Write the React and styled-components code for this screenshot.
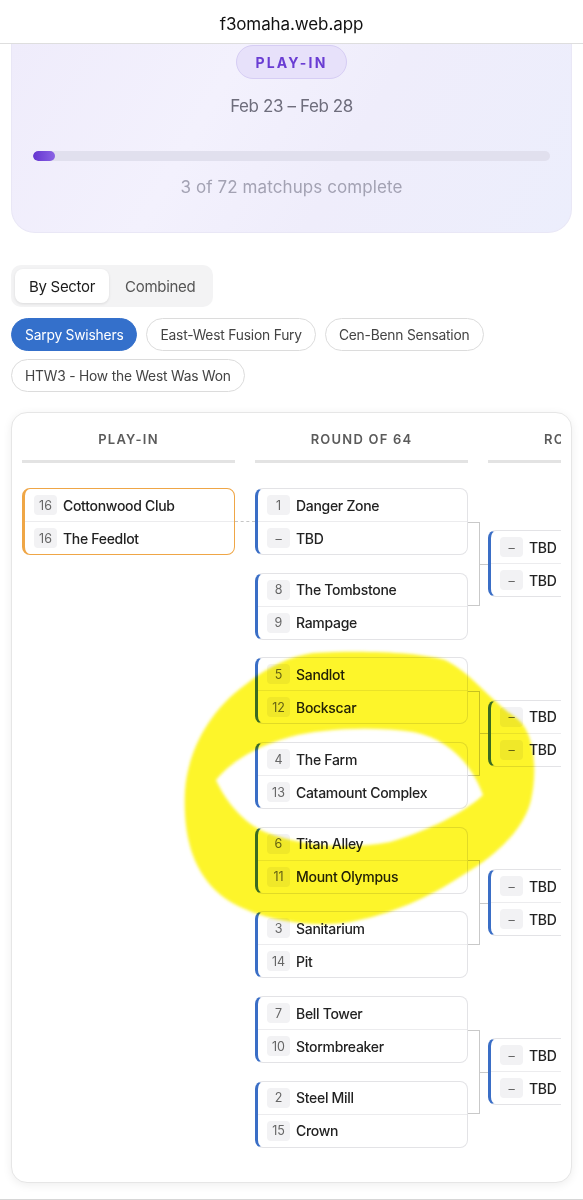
import React from "react";
import styled, { createGlobalStyle } from "styled-components";

const Global = createGlobalStyle`
  html, body { margin: 0; padding: 0; background: #ffffff; }
  body { font-family: "Inter", "Liberation Sans", sans-serif; -webkit-font-smoothing: antialiased; }
  * { box-sizing: border-box; }
`;

const Page = styled.div`
  position: relative;
  width: 583px;
  min-height: 1200px;
  border-bottom: 1px solid #d6d6d6;
  overflow: hidden;
`;

const UrlBar = styled.div`
  height: 44px;
  display: flex;
  align-items: center;
  justify-content: center;
  padding-top: 5px;
  background: #ffffff;
  border-bottom: 1px solid #dedede;
  font-size: 17px;
  color: #111;
  letter-spacing: -0.1px;
`;

const Hero = styled.section`
  margin: 0 11px;
  padding: 1px 21px 34px;
  display: flex;
  flex-direction: column;
  align-items: center;
  border: 1px solid #e9e7f6;
  border-top: none;
  border-radius: 0 0 24px 24px;
  background: linear-gradient(120deg, #efecfb 0%, #f3f1fd 35%, #efedfb 60%, #eceefc 100%);
`;

const RoundChip = styled.div`
  height: 34px;
  padding: 0 18px;
  display: flex;
  align-items: center;
  border-radius: 17px;
  background: #e7e1fa;
  border: 1px solid #d6cdf4;
  color: #6a3dd3;
  font-size: 14px;
  font-weight: 700;
  letter-spacing: 2.2px;
`;

const Dates = styled.div`
  margin-top: 16px;
  line-height: 22px;
  font-size: 17px;
  letter-spacing: -0.4px;
  color: #6e6d7c;
`;

const Track = styled.div`
  margin-top: 34px;
  align-self: stretch;
  height: 10px;
  border-radius: 5px;
  background: #e1e0ee;
  overflow: hidden;
`;

const Fill = styled.div`
  height: 100%;
  border-radius: 5px;
  background: linear-gradient(90deg, #6535d0, #8a63e4);
`;

const Progress = styled.div`
  margin-top: 15px;
  line-height: 22px;
  font-size: 17px;
  letter-spacing: 0.1px;
  color: #a3a2b3;
`;

const Controls = styled.div`
  margin: 32px 11px 0;
  display: flex;
  flex-direction: column;
  align-items: flex-start;
`;

const Segmented = styled.div`
  display: flex;
  padding: 4px;
  gap: 2px;
  border-radius: 10px;
  background: #f3f3f4;
`;

const Segment = styled.div`
  height: 34px;
  padding: 0 14px;
  display: flex;
  align-items: center;
  border-radius: 8px;
  font-size: 15px;
  letter-spacing: -0.3px;
  color: ${(p) => (p.$active ? "#1b1b1b" : "#555")};
  background: ${(p) => (p.$active ? "#ffffff" : "transparent")};
  box-shadow: ${(p) => (p.$active ? "0 1px 3px rgba(0,0,0,0.10)" : "none")};
`;

const ChipWrap = styled.div`
  margin-top: 11px;
  display: flex;
  flex-wrap: wrap;
  gap: 8px 9px;
`;

const FilterChip = styled.div`
  height: 33px;
  padding: 0 13px;
  display: flex;
  align-items: center;
  border-radius: 17px;
  font-size: 13.8px;
  letter-spacing: -0.2px;
  color: ${(p) => (p.$active ? "#ffffff" : "#444")};
  background: ${(p) => (p.$active ? "#3470cb" : "#ffffff")};
  border: 1px solid ${(p) => (p.$active ? "#3470cb" : "#dcdcdc")};
`;

const Panel = styled.section`
  margin: 20px 11px 0;
  padding: 0 10px 34px;
  border: 1px solid #e6e6e6;
  border-radius: 16px;
  background: #ffffff;
  box-shadow: 0 2px 10px rgba(0, 0, 0, 0.07);
`;

const Scroller = styled.div`
  display: flex;
  gap: 20px;
  overflow: hidden;
`;

const Column = styled.div`
  flex: 0 0 213px;
  display: flex;
  flex-direction: column;
`;

const ColHead = styled.div`
  padding: 15px 0 10px;
  line-height: 22px;
  text-align: center;
  font-size: 13px;
  font-weight: 600;
  letter-spacing: 1.2px;
  color: #5b5b5b;
  border-bottom: 3px solid #e3e3e3;
  white-space: nowrap;
`;

const ColBody = styled.div`
  padding-top: 25px;
  display: flex;
  flex-direction: column;
  gap: 17.7px;
`;

const Matchup = styled.div`
  height: 67px;
  display: flex;
  flex-direction: column;
  border-style: solid;
  border-color: ${(p) => (p.$tone === "orange" ? "#efa646" : "#e3e3e6")};
  border-width: ${(p) => (p.$tone === "orange" ? "1.5px" : "1px")};
  border-left: 3px solid ${(p) => (p.$tone === "orange" ? "#efa646" : "#3a6ec6")};
  border-radius: 8px;
  background: #ffffff;
  overflow: hidden;
`;

const Row = styled.div`
  flex: 1;
  display: flex;
  align-items: center;
  padding-left: 9px;
  gap: 6px;
  & + & { border-top: 1px solid #ececee; }
`;

const Seed = styled.span`
  width: 23px;
  height: 20px;
  flex: 0 0 23px;
  display: flex;
  align-items: center;
  justify-content: center;
  border-radius: 4px;
  background: #f2f2f4;
  font-size: 12.5px;
  color: #666;
`;

const Team = styled.span`
  font-size: 14px;
  font-weight: 500;
  letter-spacing: -0.3px;
  color: #222;
  white-space: nowrap;
`;

const PlayInSlot = styled.div`
  position: relative;
  &::after {
    content: "";
    position: absolute;
    left: 100%;
    top: 33px;
    width: 20px;
    border-top: 1px dashed #c6c6c6;
  }
`;

const Pair = styled.div`
  position: relative;
  display: flex;
  flex-direction: column;
  gap: 17.7px;
  &::after {
    content: "";
    position: absolute;
    left: 100%;
    top: 33.5px;
    bottom: 33.5px;
    width: 11px;
    border: 1px solid #c9c9c9;
    border-left: none;
  }
`;

const Slot = styled.div`
  position: relative;
  height: 151.7px;
  display: flex;
  flex-direction: column;
  justify-content: center;
  &::before {
    content: "";
    position: absolute;
    left: -9px;
    top: 50%;
    width: 9px;
    height: 1px;
    background: #c9c9c9;
  }
`;

const Highlight = styled.svg`
  position: absolute;
  left: 0;
  top: 0;
  pointer-events: none;
  mix-blend-mode: multiply;
`;

const Game = ({ tone, a, b }) => (
  <Matchup $tone={tone}>
    <Row>
      <Seed>{a[0]}</Seed>
      <Team>{a[1]}</Team>
    </Row>
    <Row>
      <Seed>{b[0]}</Seed>
      <Team>{b[1]}</Team>
    </Row>
  </Matchup>
);

const round64 = [
  [[["1", "Danger Zone"], ["–", "TBD"]], [["8", "The Tombstone"], ["9", "Rampage"]]],
  [[["5", "Sandlot"], ["12", "Bockscar"]], [["4", "The Farm"], ["13", "Catamount Complex"]]],
  [[["6", "Titan Alley"], ["11", "Mount Olympus"]], [["3", "Sanitarium"], ["14", "Pit"]]],
  [[["7", "Bell Tower"], ["10", "Stormbreaker"]], [["2", "Steel Mill"], ["15", "Crown"]]],
];

const sectors = ["Sarpy Swishers", "East-West Fusion Fury", "Cen-Benn Sensation", "HTW3 - How the West Was Won"];

export default function App() {
  const complete = 3;
  const total = 72;
  return (
    <Page>
      <Global />
      <UrlBar>f3omaha.web.app</UrlBar>
      <Hero>
        <RoundChip>PLAY-IN</RoundChip>
        <Dates>Feb 23 – Feb 28</Dates>
        <Track>
          <Fill style={{ width: `${Math.max((complete / total) * 100, 4.1)}%` }} />
        </Track>
        <Progress>{complete} of {total} matchups complete</Progress>
      </Hero>
      <Controls>
        <Segmented>
          <Segment $active>By Sector</Segment>
          <Segment>Combined</Segment>
        </Segmented>
        <ChipWrap>
          {sectors.map((s, i) => (
            <FilterChip key={s} $active={i === 0}>{s}</FilterChip>
          ))}
        </ChipWrap>
      </Controls>
      <Panel>
        <Scroller>
          <Column>
            <ColHead>PLAY-IN</ColHead>
            <ColBody>
              <PlayInSlot>
                <Game tone="orange" a={["16", "Cottonwood Club"]} b={["16", "The Feedlot"]} />
              </PlayInSlot>
            </ColBody>
          </Column>
          <Column>
            <ColHead>ROUND OF 64</ColHead>
            <ColBody>
              {round64.map((pair, i) => (
                <Pair key={i}>
                  {pair.map((g, j) => (
                    <Game key={j} a={g[0]} b={g[1]} />
                  ))}
                </Pair>
              ))}
            </ColBody>
          </Column>
          <Column>
            <ColHead>ROUND OF 32</ColHead>
            <ColBody>
              {round64.map((_, i) => (
                <Slot key={i}>
                  <Game a={["–", "TBD"]} b={["–", "TBD"]} />
                </Slot>
              ))}
            </ColBody>
          </Column>
        </Scroller>
      </Panel>
      <Highlight width="583" height="1200" viewBox="0 0 583 1200">
        <defs>
          <filter id="soft" x="-10%" y="-10%" width="120%" height="120%">
            <feGaussianBlur stdDeviation="1.6" />
          </filter>
        </defs>
        <path
          filter="url(#soft)"
          fill="#fdf52c"
          fillRule="evenodd"
          d="M 313 653 C 360 650, 420 652, 445 660 C 470 672, 490 700, 515 717 C 535 730, 537 770, 532 795 C 527 830, 490 860, 463 875 C 430 897, 390 915, 350 922 C 300 930, 240 915, 215 890 C 190 865, 183 830, 185 790 C 188 750, 210 710, 245 685 C 265 668, 290 656, 313 653 Z
             M 216 780 C 232 760, 260 745, 290 737 C 320 729, 370 726, 413 732 C 445 738, 470 760, 483 795 C 465 812, 430 830, 390 842 C 350 850, 300 846, 265 832 C 242 822, 225 800, 216 780 Z"
        />
      </Highlight>
    </Page>
  );
}
